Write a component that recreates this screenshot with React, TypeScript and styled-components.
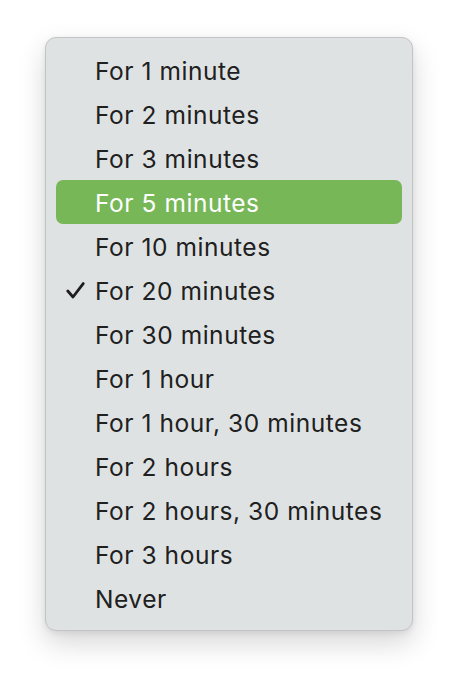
import React from "react";
import styled, { createGlobalStyle } from "styled-components";

const Global = createGlobalStyle`
  html, body { margin: 0; padding: 0; background: #ffffff; }
  body { font-family: Inter, "Noto Sans", sans-serif; -webkit-font-smoothing: antialiased; }
`;

const Page = styled.div`
  width: 458px;
  height: 684px;
  padding: 37px 0 0 45px;
  box-sizing: border-box;
`;

const Menu = styled.div`
  width: 368px;
  box-sizing: border-box;
  background: #dfe2e3;
  border: 1px solid #c2c4c5;
  border-radius: 11px;
  padding: 10px 10px 10px 10px;
  display: flex;
  flex-direction: column;
  box-shadow: 0 12px 28px rgba(0, 0, 0, 0.16), 0 2px 6px rgba(0, 0, 0, 0.08);
`;

const Item = styled.div<{ $active?: boolean }>`
  height: 44px;
  display: flex;
  align-items: center;
  border-radius: 7px;
  background: ${(p) => (p.$active ? "#77b758" : "transparent")};
  color: ${(p) => (p.$active ? "#ffffff" : "#202020")};
  font-size: 24.5px;
  letter-spacing: 0.55px;
`;

const CheckSlot = styled.div`
  width: 39px;
  display: flex;
  justify-content: flex-end;
  padding-right: 10px;
  box-sizing: border-box;
`;

const Label = styled.span`
  line-height: 1;
  transform: translateY(1px);
`;

const items = [
  "For 1 minute",
  "For 2 minutes",
  "For 3 minutes",
  "For 5 minutes",
  "For 10 minutes",
  "For 20 minutes",
  "For 30 minutes",
  "For 1 hour",
  "For 1 hour, 30 minutes",
  "For 2 hours",
  "For 2 hours, 30 minutes",
  "For 3 hours",
  "Never",
];

const Check = () => (
  <svg width="19" height="17" viewBox="0 0 19 17">
    <path d="M1.8 9 L7 15 L17.2 1.6" fill="none" stroke="#1e1e1e" strokeWidth="2.8" strokeLinecap="round" strokeLinejoin="round" />
  </svg>
);

export default function App() {
  return (
    <Page>
      <Global />
      <Menu>
        {items.map((t) => (
          <Item key={t} $active={t === "For 5 minutes"}>
            <CheckSlot>{t === "For 20 minutes" ? <Check /> : null}</CheckSlot>
            <Label>{t}</Label>
          </Item>
        ))}
      </Menu>
    </Page>
  );
}
